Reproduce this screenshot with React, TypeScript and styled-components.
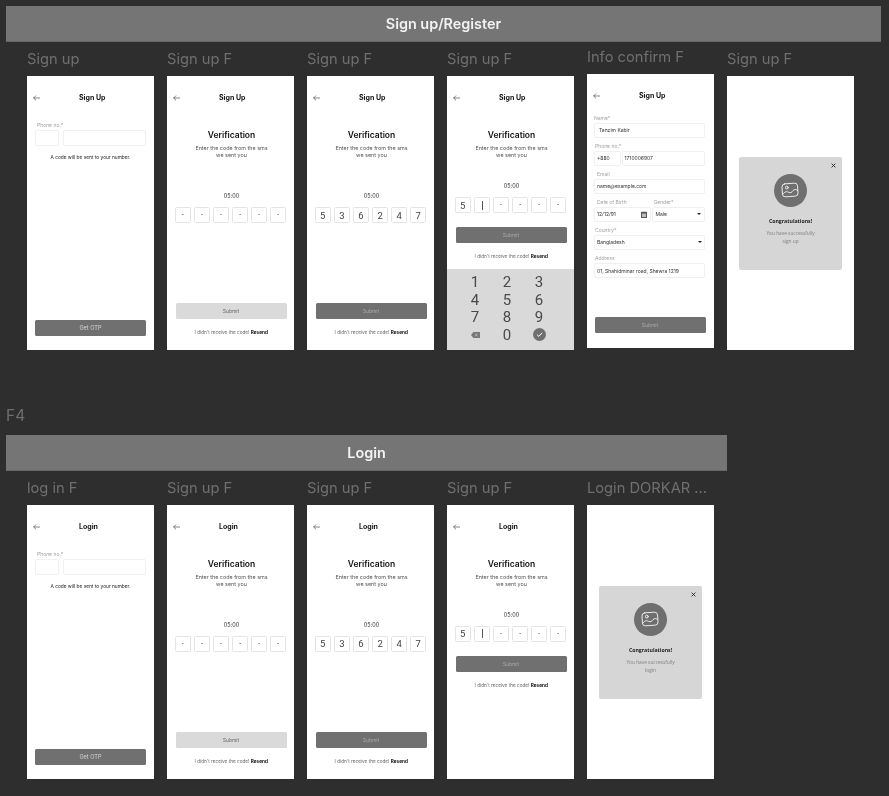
import React from 'react';
import styled, { createGlobalStyle } from 'styled-components';

const GlobalStyle = createGlobalStyle`
  html, body {
    margin: 0;
    background: #2e2e2e;
  }
  body {
    font-family: 'Inter', 'Liberation Sans', sans-serif;
  }
`;

const Page = styled.div`
  width: 889px;
  height: 796px;
  padding: 6px 0 0 6px;
  box-sizing: border-box;
  overflow: hidden;
  filter: blur(0.3px);
`;

const Section = styled.section<{ $width: number }>`
  width: ${(props) => props.$width}px;
`;

const FlowTag = styled.div`
  height: 29px;
  margin-top: 55.9px;
  font-size: 15.5px;
  line-height: 20px;
  color: #6f6f6f;
`;

const Banner = styled.div`
  height: 36px;
  display: flex;
  align-items: center;
  justify-content: center;
  background: #757575;
  border-bottom: 1px solid #666;
  box-sizing: border-box;
  color: #f2f2f2;
  font-family: 'Inter', sans-serif;
  font-size: 14.4px;
  font-weight: 600;
`;

const Row = styled.div`
  display: flex;
  align-items: flex-start;
  gap: 13px;
  padding-left: 21px;
`;

const Column = styled.div<{ $lift?: boolean }>`
  width: 127px;
  margin-top: ${(props) => (props.$lift ? '-2px' : '0')};
`;

const FrameName = styled.div`
  height: 34.3px;
  display: flex;
  align-items: center;
  box-sizing: border-box;
  font-size: 14.7px;
  color: #6f6f6f;
  white-space: nowrap;
`;

const Phone = styled.div`
  width: 127px;
  height: 273.6px;
  display: flex;
  flex-direction: column;
  background: #fff;
  color: #222;
  overflow: hidden;
`;

const Header = styled.div`
  height: 12px;
  margin-top: 15.5px;
  flex: none;
  display: flex;
  align-items: center;
  gap: 39px;
  padding-left: 6px;
`;

const HeaderTitle = styled.div`
  font-size: 7px;
  font-weight: 700;
  color: #111;
`;

const PhoneForm = styled.div`
  flex: 1;
  display: flex;
  flex-direction: column;
  padding: 17.5px 8px 14px 8px;
`;

const TinyLabel = styled.div<{ $inset?: number }>`
  height: 9px;
  line-height: 9px;
  padding-left: ${(props) => props.$inset ?? 1}px;
  font-size: 5px;
  color: #a3a3a3;
  white-space: nowrap;
`;

const InputRow = styled.div<{ $gap?: number }>`
  display: flex;
  gap: ${(props) => props.$gap ?? 4}px;
`;

const InputBox = styled.div<{ $width?: number; $height?: number; $inset?: number }>`
  ${(props) => (props.$width ? `width: ${props.$width}px; flex: none;` : 'flex: 1;')}
  height: ${(props) => props.$height ?? 16}px;
  display: flex;
  align-items: center;
  justify-content: space-between;
  padding: 0 ${(props) => props.$inset ?? 3}px;
  box-sizing: border-box;
  border: 0.5px solid #f0f0f0;
  border-radius: 2px;
  background: #fff;
  font-size: 5px;
  color: #333;
  white-space: nowrap;
`;

const Hint = styled.div`
  margin-top: 8px;
  text-align: center;
  font-size: 4.8px;
  line-height: 7px;
  color: #222;
`;

const ActionButton = styled.div<{ $tone: 'dark' | 'light'; $top?: string; $bright?: boolean; $shift?: number }>`
  width: 111px;
  height: 16px;
  flex: none;
  margin-top: ${(props) => props.$top ?? 'auto'};
  margin-left: ${(props) => props.$shift ?? 0}px;
  display: flex;
  align-items: center;
  justify-content: center;
  border-radius: 1.5px;
  background: ${(props) => (props.$tone === 'dark' ? '#707070' : '#dadada')};
  color: ${(props) => (props.$bright ? '#d8d8d8' : props.$tone === 'dark' ? '#a8a8a8' : '#6a6a6a')};
  font-size: ${(props) => (props.$bright ? '5.6px' : '5px')};
`;

const VerifyBody = styled.div`
  flex: 1;
  display: flex;
  flex-direction: column;
  align-items: center;
`;

const VerifyTitle = styled.div`
  margin-top: 26.5px;
  margin-left: 2px;
  height: 11px;
  line-height: 11px;
  font-size: 8.5px;
  font-weight: 600;
  color: #111;
`;

const VerifyText = styled.div`
  margin-top: 4px;
  margin-left: 2px;
  text-align: center;
  font-size: 5.4px;
  line-height: 7px;
  color: #555;
`;

const Timer = styled.div<{ $top: number }>`
  margin-top: ${(props) => props.$top}px;
  margin-left: 2px;
  height: 8px;
  line-height: 8px;
  font-size: 5.5px;
  color: #333;
`;

const CodeRow = styled.div`
  margin-top: 7px;
  display: flex;
  gap: 2.6px;
`;

const CodeBox = styled.div<{ $filled: boolean }>`
  width: 16.5px;
  height: 16.5px;
  display: flex;
  align-items: center;
  justify-content: center;
  box-sizing: border-box;
  border: 0.5px solid #e4e4e4;
  border-radius: 1.5px;
  font-family: 'Roboto', sans-serif;
  font-size: ${(props) => (props.$filled ? '9.5px' : '6.5px')};
  color: ${(props) => (props.$filled ? '#444' : '#222')};
`;

const Caret = styled.div`
  width: 0.6px;
  height: 9px;
  background: #555;
`;

const Resend = styled.div`
  margin-top: 9.5px;
  margin-left: 1.5px;
  height: 8px;
  line-height: 8px;
  font-size: 4.7px;
  color: #666;
  white-space: nowrap;
  b {
    color: #111;
    font-weight: 700;
  }
`;

const Keypad = styled.div`
  width: 127px;
  height: 81px;
  margin-top: auto;
  display: grid;
  grid-template-columns: repeat(3, 32px);
  grid-auto-rows: 17.6px;
  padding: 4.5px 0 0 12px;
  box-sizing: border-box;
  background: #d9d9d9;
`;

const KeyCell = styled.div`
  display: flex;
  align-items: center;
  justify-content: center;
  font-family: 'Roboto', sans-serif;
  font-size: 15px;
  color: #4a4a4a;
`;

const ConfirmForm = styled.div`
  flex: 1;
  display: flex;
  flex-direction: column;
  padding: 9px 9px 14.5px 6.5px;
`;

const FieldBlock = styled.div<{ $width?: number }>`
  height: 28px;
  padding-top: 3px;
  box-sizing: border-box;
  ${(props) => (props.$width ? `width: ${props.$width}px; flex: none;` : 'width: 100%;')}
`;

const FieldRow = styled.div`
  display: flex;
  gap: 1.5px;
`;

const SelectArrow = styled.span`
  width: 0;
  height: 0;
  border-left: 2.5px solid transparent;
  border-right: 2.5px solid transparent;
  border-top: 2.5px solid #222;
`;

const ModalHolder = styled.div`
  padding: 80.7px 12px 0;
`;

const Modal = styled.div`
  height: 113px;
  display: flex;
  flex-direction: column;
  align-items: center;
  padding: 6px 6px 0;
  box-sizing: border-box;
  border-radius: 2px;
  background: #d6d6d6;
`;

const CloseRow = styled.div`
  width: 100%;
  height: 6px;
  display: flex;
  justify-content: flex-end;
`;

const IconCircle = styled.div`
  width: 33px;
  height: 33px;
  margin-top: 5px;
  margin-right: 1px;
  display: flex;
  align-items: center;
  justify-content: center;
  border-radius: 50%;
  background: #6f6f6f;
`;

const ModalTitle = styled.div`
  margin-top: 11px;
  font-family: 'Open Sans', sans-serif;
  font-size: 5.2px;
  font-weight: 700;
  line-height: 7px;
  color: #222;
`;

const ModalText = styled.div`
  margin-top: 5.5px;
  width: 52px;
  text-align: center;
  font-family: 'Open Sans', sans-serif;
  font-size: 4.8px;
  line-height: 7.6px;
  color: #808080;
`;

const BackArrow = () => (
  <svg width="7" height="6" viewBox="0 0 7 6" fill="none" stroke="#333" strokeWidth="0.6">
    <path d="M7 3H0.6M3 0.6L0.6 3L3 5.4" />
  </svg>
);

const PhotoIcon = () => (
  <svg width="18" height="16" viewBox="0 0 18 16" fill="none" stroke="#f4f4f4" strokeWidth="0.9" strokeLinecap="round" strokeLinejoin="round">
    <g transform="rotate(-4 9 8)">
      <rect x="1.2" y="1.5" width="15.6" height="13" rx="3" />
      <circle cx="6" cy="5.4" r="1.4" />
      <path d="M1.6 11.6C4 9 5.6 9 7.4 10.2C9.4 11.5 10.6 10.4 12 8.8C13.4 7.4 15.2 7.6 16.6 9" />
    </g>
  </svg>
);

const CloseIcon = () => (
  <svg width="5" height="5" viewBox="0 0 5 5" stroke="#222" strokeWidth="0.9">
    <path d="M0.6 0.6L4.4 4.4M4.4 0.6L0.6 4.4" />
  </svg>
);

const BackspaceIcon = () => (
  <svg width="9" height="6" viewBox="0 0 9 6">
    <path d="M2.4 0H9V6H2.4L0 3Z" fill="#777" />
    <path d="M4 1.6L6.6 4.4M6.6 1.6L4 4.4" stroke="#d9d9d9" strokeWidth="0.6" />
  </svg>
);

const ConfirmIcon = () => (
  <svg width="13" height="13" viewBox="0 0 13 13">
    <circle cx="6.5" cy="6.5" r="6.5" fill="#6f6f6f" />
    <path d="M4 6.7L5.8 8.4L9.1 4.8" fill="none" stroke="#fff" strokeWidth="1" />
  </svg>
);

const CalendarIcon = () => (
  <svg width="6" height="7" viewBox="0 0 6 7">
    <rect x="0" y="0.8" width="6" height="6.2" rx="0.6" fill="#555" />
    <rect x="1" y="2.6" width="4" height="3.4" fill="#bbb" />
  </svg>
);

const PhoneEntry = ({ title }: { title: string }) => (
  <Phone>
    <Header>
      <BackArrow />
      <HeaderTitle>{title}</HeaderTitle>
    </Header>
    <PhoneForm>
      <TinyLabel $inset={2}>Phone no.*</TinyLabel>
      <InputRow>
        <InputBox $width={24} />
        <InputBox />
      </InputRow>
      <Hint>A code will be sent to your number.</Hint>
      <ActionButton $tone="dark" $bright>Get OTP</ActionButton>
    </PhoneForm>
  </Phone>
);

interface VerifyProps {
  title: string;
  digits: string[];
  tone: 'dark' | 'light';
  compact?: boolean;
  keypad?: boolean;
}

const keys = ['1', '2', '3', '4', '5', '6', '7', '8', '9'];

const Verify = ({ title, digits, tone, compact, keypad }: VerifyProps) => (
  <Phone>
    <Header>
      <BackArrow />
      <HeaderTitle>{title}</HeaderTitle>
    </Header>
    <VerifyBody>
      <VerifyTitle>Verification</VerifyTitle>
      <VerifyText>
        Enter the code from the sms
        <br />
        we sent you
      </VerifyText>
      <Timer $top={compact ? 22.5 : 32.5}>05:00</Timer>
      <CodeRow>
        {digits.map((digit, index) => (
          <CodeBox key={index} $filled={digit !== '-'}>
            {digit === '|' ? <Caret /> : digit}
          </CodeBox>
        ))}
      </CodeRow>
      <ActionButton $tone={tone} $top={compact ? '13.5px' : '79.5px'} $shift={1}>
        Submit
      </ActionButton>
      <Resend>
        I didn't receive the code! <b>Resend</b>
      </Resend>
      {keypad && (
        <Keypad>
          {keys.map((key) => (
            <KeyCell key={key}>{key}</KeyCell>
          ))}
          <KeyCell>
            <BackspaceIcon />
          </KeyCell>
          <KeyCell>0</KeyCell>
          <KeyCell>
            <ConfirmIcon />
          </KeyCell>
        </Keypad>
      )}
    </VerifyBody>
  </Phone>
);

const InfoConfirm = () => (
  <Phone>
    <Header>
      <BackArrow />
      <HeaderTitle>Sign Up</HeaderTitle>
    </Header>
    <ConfirmForm>
      <FieldBlock>
        <TinyLabel $inset={0.5}>Name*</TinyLabel>
        <InputBox $height={15} $inset={4.5}>Tanzim Kabir</InputBox>
      </FieldBlock>
      <FieldBlock>
        <TinyLabel $inset={1.5}>Phone no.*</TinyLabel>
        <InputRow $gap={1.5}>
          <InputBox $width={27} $height={15} $inset={2.5}>+880</InputBox>
          <InputBox $height={15} $inset={1.5}>1710006907</InputBox>
        </InputRow>
      </FieldBlock>
      <FieldBlock>
        <TinyLabel $inset={3.5}>Email</TinyLabel>
        <InputBox $height={15} $inset={2.5}>name@example.com</InputBox>
      </FieldBlock>
      <FieldRow>
        <FieldBlock $width={57}>
          <TinyLabel $inset={3.5}>Date of Birth</TinyLabel>
          <InputBox $height={15} $inset={2.5}>
            12/12/91
            <CalendarIcon />
          </InputBox>
        </FieldBlock>
        <FieldBlock $width={52.5}>
          <TinyLabel $inset={1.5}>Gender*</TinyLabel>
          <InputBox $height={15} $inset={2.5}>
            Male
            <SelectArrow />
          </InputBox>
        </FieldBlock>
      </FieldRow>
      <FieldBlock>
        <TinyLabel $inset={1.5}>Country*</TinyLabel>
        <InputBox $height={15} $inset={2.5}>
          Bangladesh
          <SelectArrow />
        </InputBox>
      </FieldBlock>
      <FieldBlock>
        <TinyLabel $inset={1.5}>Address</TinyLabel>
        <InputBox $height={15.5} $inset={2.5}>01, Shahidminar road, Shewra 1219</InputBox>
      </FieldBlock>
      <ActionButton $tone="dark" $shift={1}>
        Submit
      </ActionButton>
    </ConfirmForm>
  </Phone>
);

const Success = ({ action }: { action: string }) => (
  <Phone>
    <ModalHolder>
      <Modal>
        <CloseRow>
          <CloseIcon />
        </CloseRow>
        <IconCircle>
          <PhotoIcon />
        </IconCircle>
        <ModalTitle>Congratulations!</ModalTitle>
        <ModalText>You have successfully {action}</ModalText>
      </Modal>
    </ModalHolder>
  </Phone>
);

const blank = ['-', '-', '-', '-', '-', '-'];
const filled = ['5', '3', '6', '2', '4', '7'];
const started = ['5', '|', '-', '-', '-', '-'];

const App = () => (
  <Page>
    <GlobalStyle />
    <Section $width={875}>
      <Banner>Sign up/Register</Banner>
      <Row>
        <Column>
          <FrameName>Sign up</FrameName>
          <PhoneEntry title="Sign Up" />
        </Column>
        <Column>
          <FrameName>Sign up F</FrameName>
          <Verify title="Sign Up" digits={blank} tone="light" />
        </Column>
        <Column>
          <FrameName>Sign up F</FrameName>
          <Verify title="Sign Up" digits={filled} tone="dark" />
        </Column>
        <Column>
          <FrameName>Sign up F</FrameName>
          <Verify title="Sign Up" digits={started} tone="dark" compact keypad />
        </Column>
        <Column $lift>
          <FrameName>Info confirm F</FrameName>
          <InfoConfirm />
        </Column>
        <Column>
          <FrameName>Sign up F</FrameName>
          <Success action="sign up" />
        </Column>
      </Row>
    </Section>
    <Section $width={721}>
      <FlowTag>F4</FlowTag>
      <Banner>Login</Banner>
      <Row>
        <Column>
          <FrameName>log in F</FrameName>
          <PhoneEntry title="Login" />
        </Column>
        <Column>
          <FrameName>Sign up F</FrameName>
          <Verify title="Login" digits={blank} tone="light" />
        </Column>
        <Column>
          <FrameName>Sign up F</FrameName>
          <Verify title="Login" digits={filled} tone="dark" />
        </Column>
        <Column>
          <FrameName>Sign up F</FrameName>
          <Verify title="Login" digits={started} tone="dark" compact />
        </Column>
        <Column>
          <FrameName>Login DORKAR ...</FrameName>
          <Success action="login" />
        </Column>
      </Row>
    </Section>
  </Page>
);

export default App;
